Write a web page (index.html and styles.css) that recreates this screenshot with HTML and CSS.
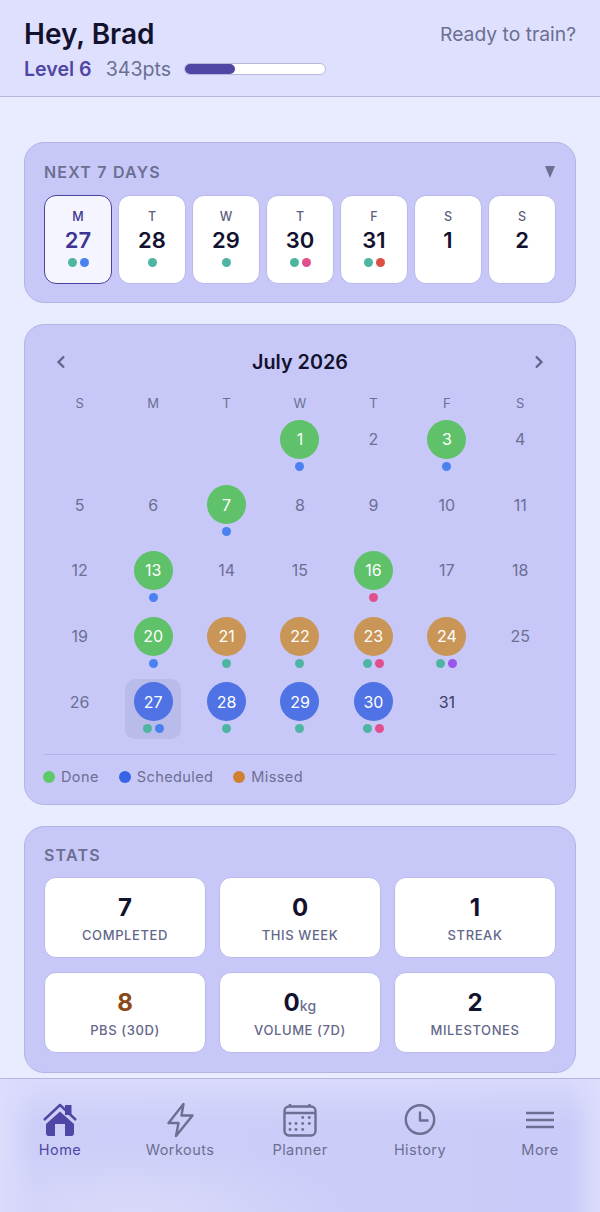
FILE: index.html
```html
<!DOCTYPE html>
<html lang="en">
<head>
    <meta charset="UTF-8">
    <meta name="viewport" content="width=device-width, initial-scale=1.0">
    <title>Home</title>
    <link rel="stylesheet" href="styles.css">
</head>
<body>
    <header class="top">
        <div class="top-left">
            <h1>Hey, Brad</h1>
            <div class="level-row">
                <span class="level">Level 6</span>
                <span class="points">343pts</span>
                <div class="progress"><div class="progress-fill"></div></div>
            </div>
        </div>
        <div class="tagline">Ready to train?</div>
    </header>

    <main class="content">
        <section class="card week-card">
            <div class="card-head">
                <h2>NEXT 7 DAYS</h2>
                <span class="caret"></span>
            </div>
            <div class="week">
                <div class="day today"><span class="day-name">M</span><span class="day-num">27</span><span class="dots"><i class="dot teal"></i><i class="dot blue"></i></span></div>
                <div class="day"><span class="day-name">T</span><span class="day-num">28</span><span class="dots"><i class="dot teal"></i></span></div>
                <div class="day"><span class="day-name">W</span><span class="day-num">29</span><span class="dots"><i class="dot teal"></i></span></div>
                <div class="day"><span class="day-name">T</span><span class="day-num">30</span><span class="dots"><i class="dot teal"></i><i class="dot pink"></i></span></div>
                <div class="day"><span class="day-name">F</span><span class="day-num">31</span><span class="dots"><i class="dot teal"></i><i class="dot red"></i></span></div>
                <div class="day"><span class="day-name">S</span><span class="day-num">1</span><span class="dots"></span></div>
                <div class="day"><span class="day-name">S</span><span class="day-num">2</span><span class="dots"></span></div>
            </div>
        </section>

        <section class="card month-card">
            <div class="month-head">
                <svg class="chevron" viewBox="0 0 12 16"><path d="M9 2.500 3.500 8 9 13.500"/></svg>
                <h3>July 2026</h3>
                <svg class="chevron" viewBox="0 0 12 16"><path d="M3 2.500 8.500 8 3 13.500"/></svg>
            </div>
            <div class="weekdays">
                <span>S</span><span>M</span><span>T</span><span>W</span><span>T</span><span>F</span><span>S</span>
            </div>
            <div class="calendar">
                <div class="cell"></div>
                <div class="cell"></div>
                <div class="cell"></div>
                <div class="cell"><span class="date done">1</span><span class="dots"><i class="dot blue"></i></span></div>
                <div class="cell"><span class="date">2</span></div>
                <div class="cell"><span class="date done">3</span><span class="dots"><i class="dot blue"></i></span></div>
                <div class="cell"><span class="date">4</span></div>

                <div class="cell"><span class="date">5</span></div>
                <div class="cell"><span class="date">6</span></div>
                <div class="cell"><span class="date done">7</span><span class="dots"><i class="dot blue"></i></span></div>
                <div class="cell"><span class="date">8</span></div>
                <div class="cell"><span class="date">9</span></div>
                <div class="cell"><span class="date">10</span></div>
                <div class="cell"><span class="date">11</span></div>

                <div class="cell"><span class="date">12</span></div>
                <div class="cell"><span class="date done">13</span><span class="dots"><i class="dot blue"></i></span></div>
                <div class="cell"><span class="date">14</span></div>
                <div class="cell"><span class="date">15</span></div>
                <div class="cell"><span class="date done">16</span><span class="dots"><i class="dot pink"></i></span></div>
                <div class="cell"><span class="date">17</span></div>
                <div class="cell"><span class="date">18</span></div>

                <div class="cell"><span class="date">19</span></div>
                <div class="cell"><span class="date done">20</span><span class="dots"><i class="dot blue"></i></span></div>
                <div class="cell"><span class="date missed">21</span><span class="dots"><i class="dot teal"></i></span></div>
                <div class="cell"><span class="date missed">22</span><span class="dots"><i class="dot teal"></i></span></div>
                <div class="cell"><span class="date missed">23</span><span class="dots"><i class="dot teal"></i><i class="dot pink"></i></span></div>
                <div class="cell"><span class="date missed">24</span><span class="dots"><i class="dot teal"></i><i class="dot purple"></i></span></div>
                <div class="cell"><span class="date">25</span></div>

                <div class="cell"><span class="date">26</span></div>
                <div class="cell current"><span class="date scheduled">27</span><span class="dots"><i class="dot teal"></i><i class="dot blue"></i></span></div>
                <div class="cell"><span class="date scheduled">28</span><span class="dots"><i class="dot teal"></i></span></div>
                <div class="cell"><span class="date scheduled">29</span><span class="dots"><i class="dot teal"></i></span></div>
                <div class="cell"><span class="date scheduled">30</span><span class="dots"><i class="dot teal"></i><i class="dot pink"></i></span></div>
                <div class="cell"><span class="date upcoming">31</span></div>
            </div>
            <div class="legend">
                <span class="legend-item"><i class="swatch swatch-done"></i>Done</span>
                <span class="legend-item"><i class="swatch swatch-scheduled"></i>Scheduled</span>
                <span class="legend-item"><i class="swatch swatch-missed"></i>Missed</span>
            </div>
        </section>

        <section class="card stats-card">
            <h2>STATS</h2>
            <div class="stats">
                <div class="stat"><span class="stat-value">7</span><span class="stat-label">COMPLETED</span></div>
                <div class="stat"><span class="stat-value">0</span><span class="stat-label">THIS WEEK</span></div>
                <div class="stat"><span class="stat-value">1</span><span class="stat-label">STREAK</span></div>
                <div class="stat"><span class="stat-value pbs">8</span><span class="stat-label">PBS (30D)</span></div>
                <div class="stat"><span class="stat-value">0<small>kg</small></span><span class="stat-label">VOLUME (7D)</span></div>
                <div class="stat"><span class="stat-value">2</span><span class="stat-label">MILESTONES</span></div>
            </div>
        </section>
    </main>

    <nav class="tabs">
        <a class="tab active">
            <svg viewBox="0 0 36 36">
                <path class="line" d="M2 18 18 3l16 15"/>
                <rect class="solid" x="23" y="3" width="6.500" height="10"/>
                <path class="solid" d="M18 9.500 32 22v9a3 3 0 0 1-3 3h-6V22H13v12H7a3 3 0 0 1-3-3v-9z"/>
            </svg>
            Home
        </a>
        <a class="tab">
            <svg viewBox="0 0 36 36"><path class="line" d="M21.500 2 6.500 21h10L14 34l16.500-20.500h-11z"/></svg>
            Workouts
        </a>
        <a class="tab">
            <svg viewBox="0 0 36 36">
                <rect class="line" x="2.500" y="4.500" width="31" height="29" rx="4.500"/>
                <path class="line" d="M2.500 11h31M8 2v3M27.500 2v3"/>
                <g class="solid">
                    <circle cx="20.700" cy="15.500" r="1.400"/><circle cx="27.300" cy="15.500" r="1.400"/>
                    <circle cx="8" cy="21.500" r="1.400"/><circle cx="14" cy="21.500" r="1.400"/><circle cx="20.700" cy="21.500" r="1.400"/><circle cx="27.300" cy="21.500" r="1.400"/>
                    <circle cx="8" cy="27.500" r="1.400"/><circle cx="14" cy="27.500" r="1.400"/><circle cx="20.700" cy="27.500" r="1.400"/>
                </g>
            </svg>
            Planner
        </a>
        <a class="tab">
            <svg viewBox="0 0 36 36">
                <circle class="line" cx="18" cy="17.500" r="14.200"/>
                <path class="line" d="M18 9.500v9h8.500"/>
            </svg>
            History
        </a>
        <a class="tab">
            <svg viewBox="0 0 36 36"><path class="line" d="M4 11h28M4 18h28M4 25h28"/></svg>
            More
        </a>
    </nav>
</body>
</html>
```

FILE: styles.css
```css
* {
    box-sizing: border-box;
}
body {
    margin: 0;
    height: 1212px;
    overflow: hidden;
    display: flex;
    flex-direction: column;
    font-family: Inter, "Liberation Sans", sans-serif;
    color: #12122e;
    background-color: #e9ebff;
}
h1, h2, h3 {
    margin: 0;
}

/* header */
.top {
    height: 97px;
    padding: 18px 24px 0;
    display: flex;
    justify-content: space-between;
    align-items: flex-start;
    background: #dfe0fd;
    border-bottom: 1px solid #b6b6df;
}
h1 {
    font-size: 28px;
    line-height: 32px;
    font-weight: 600;
}
.level-row {
    margin-top: 8px;
    display: flex;
    align-items: center;
    height: 22px;
}
.level {
    font-size: 19.600px;
    font-weight: 600;
    color: #4f46a5;
}
.points {
    margin-left: 14px;
    font-size: 19.600px;
    color: #6b6f92;
}
.progress {
    margin-left: 13px;
    width: 142px;
    height: 12px;
    background: #fff;
    border: 1px solid #b9b9de;
    border-radius: 6px;
}
.progress-fill {
    width: 36%;
    height: 100%;
    background: #4f46a5;
    border-radius: 5px;
}
.tagline {
    margin-top: 5px;
    font-size: 19.300px;
    line-height: 22px;
    color: #6b6f92;
}

/* cards */
.content {
    padding: 45px 24px 0;
    display: flex;
    flex-direction: column;
    gap: 21px;
}
.card {
    padding: 0 19px;
    background: #c7c8f8;
    border: 1px solid #b3b4e6;
    border-radius: 20px;
}
h2 {
    font-size: 16px;
    line-height: 18px;
    font-weight: 600;
    letter-spacing: 1.200px;
    color: #6b6f92;
}
.dots {
    display: flex;
    justify-content: center;
    gap: 3px;
    height: 9px;
}
.dot {
    width: 9px;
    height: 9px;
    border-radius: 50%;
}
.teal { background: #4fb5a3; }
.blue { background: #4a80ef; }
.pink { background: #e0508f; }
.red { background: #dd4f45; }
.purple { background: #9a55ea; }

/* next 7 days */
.week-card {
    height: 161px;
    padding-top: 20px;
}
.card-head {
    display: flex;
    justify-content: space-between;
    align-items: center;
    margin-bottom: 14px;
}
.caret {
    width: 0;
    height: 0;
    margin-right: 1px;
    border-left: 5.500px solid transparent;
    border-right: 5.500px solid transparent;
    border-top: 12px solid #6b6f92;
}
.week {
    display: grid;
    grid-template-columns: repeat(7, 1fr);
    gap: 6px;
}
.day {
    height: 89px;
    padding-top: 13px;
    display: flex;
    flex-direction: column;
    align-items: center;
    background: #fff;
    border: 1px solid #b8b9e8;
    border-radius: 12px;
}
.day-name {
    font-size: 12.500px;
    line-height: 16px;
    font-weight: 500;
    color: #5d6080;
}
.day-num {
    margin-top: 2px;
    font-size: 22px;
    line-height: 26px;
    font-weight: 600;
}
.day .dots {
    margin-top: 5px;
}
.today {
    background: #f4f5fe;
    border: 1.500px solid #4a41a0;
    padding-top: 12.500px;
}
.today .day-name,
.today .day-num {
    color: #3f3590;
}

/* month calendar */
.month-card {
    height: 481px;
    padding-top: 24px;
}
.month-head {
    height: 26px;
    padding: 0 11px;
    display: flex;
    justify-content: space-between;
    align-items: center;
}
.month-head h3 {
    font-size: 19.800px;
    font-weight: 600;
}
.chevron {
    width: 12px;
    height: 16px;
    fill: none;
    stroke: #5f6385;
    stroke-width: 2.200;
}
.weekdays {
    margin: 20px -1px 0;
    display: grid;
    grid-template-columns: repeat(7, 1fr);
    text-align: center;
    font-size: 13px;
    line-height: 16px;
    color: #6b6f92;
}
.calendar {
    margin: 5px -1px 0;
    display: grid;
    grid-template-columns: repeat(7, 1fr);
    grid-auto-rows: 60px;
    row-gap: 5.700px;
    justify-items: center;
}
.cell {
    width: 56px;
    height: 60px;
    padding-top: 3.500px;
    border-radius: 10px;
}
.cell .dots {
    margin-top: 3px;
}
.current {
    background: #b9bbeb;
}
.date {
    margin: 0 auto;
    width: 39px;
    height: 39px;
    display: flex;
    align-items: center;
    justify-content: center;
    border-radius: 50%;
    font-size: 16px;
    color: #6b6f92;
}
.done { background: #5fc16a; color: #fff; }
.missed { background: #c99658; color: #fff; }
.scheduled { background: #4f72e4; color: #fff; }
.upcoming { color: #3e4060; }
.legend {
    margin-top: 15px;
    padding-top: 13px;
    border-top: 1px solid #b3b4e6;
    display: flex;
    gap: 21px;
    font-size: 14.500px;
    line-height: 18px;
    letter-spacing: 0.4px;
    color: #6b6f92;
}
.legend-item {
    display: flex;
    align-items: center;
    gap: 6px;
}
.swatch {
    width: 12px;
    height: 12px;
    margin-left: -1px;
    border-radius: 50%;
}
.swatch-done { background: #5fc868; }
.swatch-scheduled { background: #3764e6; }
.swatch-missed { background: #cf8030; }

/* stats */
.stats-card {
    height: 247px;
    padding-top: 19px;
}
.stats {
    margin-top: 13px;
    display: grid;
    grid-template-columns: repeat(3, 1fr);
    grid-auto-rows: 81px;
    gap: 14px 13px;
}
.stat {
    padding-top: 15px;
    display: flex;
    flex-direction: column;
    align-items: center;
    background: #fff;
    border: 1px solid #b8b9e8;
    border-radius: 12px;
}
.stat-value {
    font-size: 24px;
    line-height: 30px;
    font-weight: 700;
}
.stat-value small {
    font-size: 14px;
    line-height: 0;
    font-weight: 500;
    letter-spacing: 0.3px;
    color: #6b6f92;
}
.pbs {
    color: #8a4a17;
}
.stat-label {
    margin-top: 4px;
    font-size: 13px;
    line-height: 16px;
    font-weight: 500;
    letter-spacing: 0.6px;
    color: #63678a;
}

/* bottom tabs */
.tabs {
    margin-top: 5px;
    flex: 1;
    padding-top: 23px;
    display: grid;
    grid-template-columns: repeat(5, 1fr);
    align-items: start;
    border-top: 1px solid #b6b6df;
    background:
        linear-gradient(180deg, rgba(222, 223, 253, 0.7), transparent 34%),
        radial-gradient(ellipse 220px 70px at 22% 100%, #d9daf9, transparent),
        linear-gradient(90deg, #dcddfc, #cdcef8 6%, #cacbf8 95%, #dcddfc);
}
.tab {
    display: flex;
    flex-direction: column;
    align-items: center;
    font-size: 14.500px;
    line-height: 18px;
    letter-spacing: 0.45px;
    color: #6b6f92;
}
.tab svg {
    width: 36px;
    height: 36px;
    margin-bottom: 3px;
}
.tab .line {
    fill: none;
    stroke: #6b6f92;
    stroke-width: 2.400;
    stroke-linejoin: round;
}
.tab .solid {
    fill: #6b6f92;
}
.tab.active {
    color: #4f46a5;
}
.tab.active .line {
    stroke: #4f46a5;
}
.tab.active .solid {
    fill: #4f46a5;
}
```
